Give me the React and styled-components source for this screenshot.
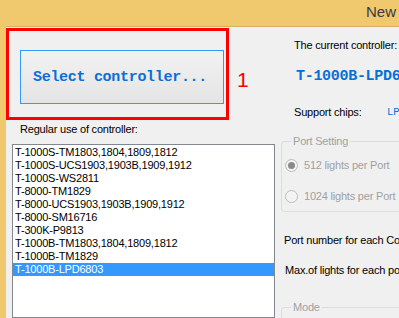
import React from 'react';
import styled, { createGlobalStyle } from 'styled-components';

const GlobalStyle = createGlobalStyle`
  html, body {
    margin: 0;
    padding: 0;
  }
  body {
    font-family: "Liberation Sans", Arial, sans-serif;
    background: #f0c96e;
  }
`;

const controllers = [
    'T-1000S-TM1803,1804,1809,1812',
    'T-1000S-UCS1903,1903B,1909,1912',
    'T-1000S-WS2811',
    'T-8000-TM1829',
    'T-8000-UCS1903,1903B,1909,1912',
    'T-8000-SM16716',
    'T-300K-P9813',
    'T-1000B-TM1803,1804,1809,1812',
    'T-1000B-TM1829',
    'T-1000B-LPD6803',
];

const Window = styled.div`
    width: 399px;
    height: 318px;
    overflow: hidden;
    display: flex;
    flex-direction: column;
    background: #f0c96e; /* yellow window frame */
`;

const TitleBar = styled.div`
    height: 26px;
    flex-shrink: 0;
    padding-left: 366px;
    font-size: 15px;
    line-height: 23px;
    color: #3a3a3a;
    white-space: nowrap;
    overflow: hidden;
`;

const Body = styled.div`
    flex: 1;
    min-height: 0;
    margin-left: 6px;
    background: #f0f0f0;
    border-top: 1px solid #d6b064;
    display: flex;
    overflow: hidden;
    font-size: 11px;
    line-height: 13px;
    letter-spacing: -0.2px;
    color: #000;
`;

const LeftColumn = styled.div`
    width: 269px;
    flex-shrink: 0;
    display: flex;
    flex-direction: column;
`;

const TopRow = styled.div`
    display: flex;
    margin-top: 1px;
`;

/* red annotation frame round the button */
const Highlight = styled.div`
    width: 223px;
    height: 92px;
    box-sizing: border-box;
    border: 3px solid #ff0000;
    padding: 19px 0 0 11px;
`;

const SelectButton = styled.button`
    width: 204px;
    height: 54px;
    box-sizing: border-box;
    border: 1px solid #3399ff;
    background: linear-gradient(#f2f2f2, #e4e4e4);
    display: flex;
    align-items: center;
    justify-content: center;
    padding: 0 4px 0 0;
    font-family: "Liberation Mono", "Courier New", monospace;
    font-weight: bold;
    font-size: 15px;
    letter-spacing: -0.3px;
    color: #0a6fd6;
`;

const StepNumber = styled.span`
    margin: 40px 0 0 8px;
    font-size: 21px;
    line-height: 24px;
    letter-spacing: 0;
    color: #ff0000;
`;

const ListLabel = styled.div`
    margin: 3px 0 0 14px;
`;

const ListBox = styled.ul`
    list-style: none;
    margin: 8px 0 0 6px;
    padding: 1px 0 0;
    width: 263px;
    box-sizing: border-box;
    flex: 1;
    background: #fff;
    border: 1px solid #828790;
`;

const ListItem = styled.li`
    height: 13px;
    padding-left: 2px;
    white-space: nowrap;
    background: ${({ $selected }) => ($selected ? '#3399ff' : 'transparent')};
    color: ${({ $selected }) => ($selected ? '#fff' : '#000')};
`;

const RightColumn = styled.div`
    flex: 1;
    min-width: 0;
    margin-left: 6px;
    display: flex;
    flex-direction: column;
    overflow: hidden;
    white-space: nowrap;
`;

const InfoLabel = styled.div`
    margin: 12px 0 0 13px;
`;

const CurrentName = styled.div`
    margin: 16px 0 0 15px;
    font-family: "Liberation Mono", "Courier New", monospace;
    font-weight: bold;
    font-size: 15px;
    line-height: 18px;
    letter-spacing: -0.3px;
    color: #0a6fd6;
`;

const ChipsRow = styled.div`
    margin: 20px 0 0 13px;
    display: grid;
    grid-template-columns: 93px auto;
`;

const ChipsValue = styled.span`
    font-family: "Liberation Mono", "Courier New", monospace;
    font-size: 10.5px;
    letter-spacing: 0;
    color: #0a6fd6;
`;

const GroupBox = styled.fieldset`
    margin: ${({ $top }) => $top}px 0 0 0;
    width: 220px;
    min-width: 220px;
    border: 1px solid #dcdcdc;
    border-radius: 3px;
    padding: 7px 0 5px 3px;
    display: flex;
    flex-direction: column;
    gap: 11px;
`;

const GroupTitle = styled.legend`
    margin-left: 6px;
    padding: 0 2px;
    color: #a0a0a0;
`;

const RadioRow = styled.label`
    height: 20px;
    display: flex;
    align-items: center;
    gap: 6px;
    color: #a0a0a0;
`;

const RadioCircle = styled.span`
    width: 13px;
    height: 13px;
    box-sizing: border-box;
    border-radius: 50%;
    border: 1px solid #bcbcbc;
    background: #f3f3f3;
    display: grid;
    place-items: center;

    &::after {
        content: '';
        width: 7px;
        height: 7px;
        border-radius: 50%;
        background: ${({ $checked }) => ($checked ? '#8a8a8a' : 'transparent')};
    }
`;

const FieldLabel = styled.div`
    margin: ${({ $top }) => $top}px 0 0 ${({ $left }) => $left}px;
`;

const App = () => {
    return (
        <>
            <GlobalStyle />
            <Window>
                <TitleBar>New Project</TitleBar>
                <Body>
                    <LeftColumn>
                        <TopRow>
                            <Highlight>
                                <SelectButton>Select controller...</SelectButton>
                            </Highlight>
                            <StepNumber>1</StepNumber>
                        </TopRow>
                        <ListLabel>Regular use of controller:</ListLabel>
                        <ListBox>
                            {controllers.map((name, i) => (
                                <ListItem key={name} $selected={i === controllers.length - 1}>
                                    {name}
                                </ListItem>
                            ))}
                        </ListBox>
                    </LeftColumn>
                    <RightColumn>
                        <InfoLabel>The current controller:</InfoLabel>
                        <CurrentName>T-1000B-LPD6803</CurrentName>
                        <ChipsRow>
                            <span>Support chips:</span>
                            <ChipsValue>LPD6803</ChipsValue>
                        </ChipsRow>
                        <GroupBox $top={16}>
                            <GroupTitle>Port Setting</GroupTitle>
                            <RadioRow>
                                <RadioCircle $checked />
                                512 lights per Port
                            </RadioRow>
                            <RadioRow>
                                <RadioCircle />
                                1024 lights per Port
                            </RadioRow>
                        </GroupBox>
                        <FieldLabel $top={22} $left={3}>Port number for each Controller:</FieldLabel>
                        <FieldLabel $top={17} $left={4}>Max.of lights for each port:</FieldLabel>
                        <GroupBox $top={24}>
                            <GroupTitle>Mode</GroupTitle>
                        </GroupBox>
                    </RightColumn>
                </Body>
            </Window>
        </>
    );
};

export default App;
